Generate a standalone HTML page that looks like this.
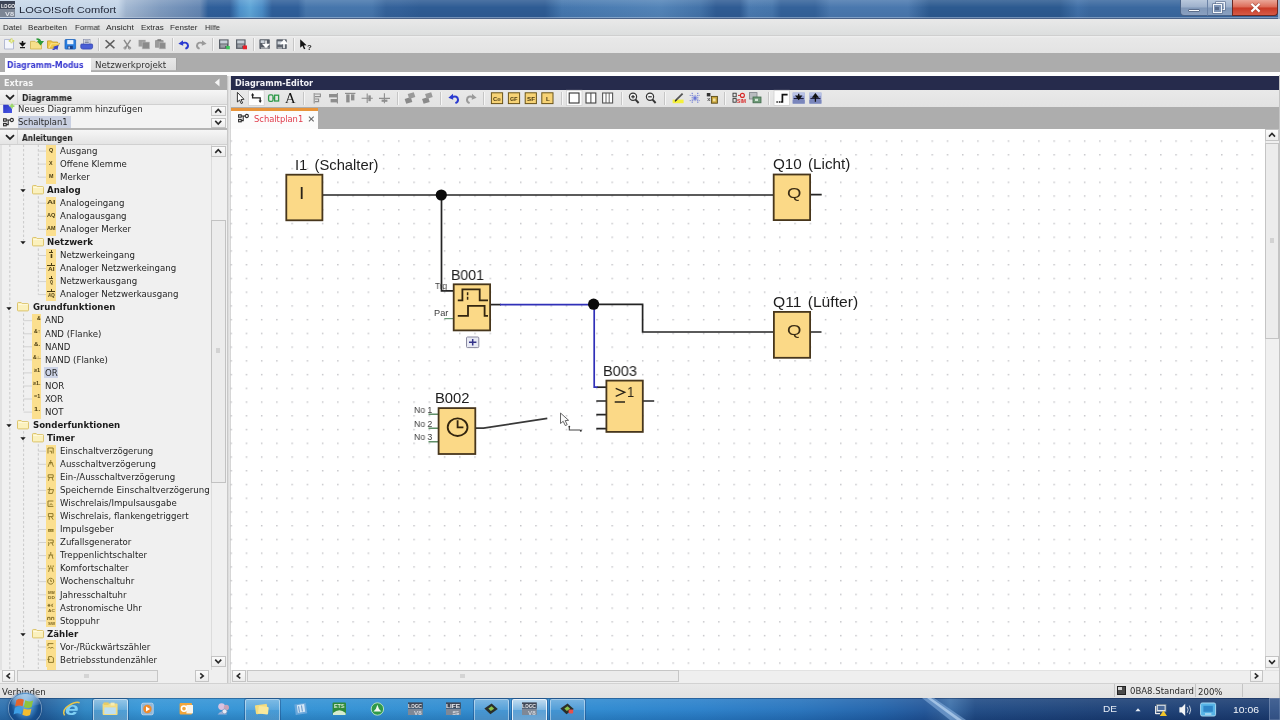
<!DOCTYPE html>
<html lang="de"><head><meta charset="utf-8"><title>LOGO!Soft Comfort</title>
<style>
html,body{margin:0;padding:0;}
body{width:1280px;height:720px;overflow:hidden;position:relative;background:#fff;font-family:"DejaVu Sans","Liberation Sans",sans-serif;}
div,span,svg{box-sizing:border-box;}
.t{will-change:transform;position:absolute;white-space:pre;transform-origin:0 50%;font-family:"DejaVu Sans","Liberation Sans",sans-serif;}
.t.l{font-family:"Liberation Sans",sans-serif;}
.t.b{font-weight:bold;}
svg{position:absolute;overflow:visible;}
.t.s{font-family:"Liberation Serif",serif;}

</style></head>
<body>
<div id="titlebar" style="position:absolute;left:0;top:0;width:1280px;height:19px;background:linear-gradient(90deg,#c9d9ea 0px,#c3d4e7 118px,#a3b8d2 126px,#7f9bbf 160px,#6486b2 200px,#2f5f9a 208px,#2e5e9a 230px,#4f93cc 240px,#5fa6d8 250px,#4a8cc6 262px,#2f5f9a 272px,#2f5f9a 298px,#4676ac 306px,#4676ac 372px,#34629a 386px,#33619a 400px,#2e5c94 420px,#2e5c94 545px,#4577ae 562px,#5384b8 660px,#4373a9 700px,#2f5c94 716px,#2f5c94 740px,#4a7ab0 749px,#4676ac 772px,#34629a 781px,#34629a 815px,#4a78ae 830px,#4a78ae 908px,#2c5a90 930px,#2c5a90 1060px,#4070a8 1078px,#3a689f 1090px,#3a689f 1280px);"></div>
<div style="position:absolute;left:0px;top:0px;width:1280px;height:19px;background:linear-gradient(180deg,rgba(255,255,255,.14) 0,rgba(255,255,255,0) 40%,rgba(0,0,20,.06) 100%);"></div>
<div style="position:absolute;left:0px;top:17.2px;width:1280px;height:1.1px;background:rgba(200,215,235,.45);"></div>
<div style="position:absolute;left:0px;top:18.2px;width:1280px;height:0.8px;background:#4a6288;"></div>
<div style="position:absolute;left:0px;top:1px;width:15px;height:8px;background:#3c4556;"></div>
<div style="position:absolute;left:0px;top:9px;width:15px;height:8px;background:#7b8594;"></div>
<span class="t l b" style="left:0.50px;top:2.00px;font-size:5.5px;line-height:8px;color:#fff;transform:scaleX(0.8640);">LOGO</span>
<span class="t l b" style="left:5.00px;top:9.50px;font-size:6px;line-height:8px;color:#dfe3ea;transform:scaleX(1.2255);">V8</span>
<span class="t l" style="left:19.40px;top:3.00px;font-size:9.9px;line-height:13px;color:#1a2030;transform:scaleX(1.1209);">LOGO!Soft Comfort</span>
<div style="position:absolute;left:1179.5px;top:0px;width:28px;height:15.6px;background:linear-gradient(180deg,#b9c8dc,#9db0cb 48%,#7f97b8 52%,#8aa0c0);border:1px solid #4a6388;border-top:0;border-radius:0 0 0 4px;"></div>
<div style="position:absolute;left:1206.5px;top:0px;width:26px;height:15.6px;background:linear-gradient(180deg,#b9c8dc,#9db0cb 48%,#7f97b8 52%,#8aa0c0);border:1px solid #4a6388;border-top:0;border-left:1px solid #6a82a6;"></div>
<div style="position:absolute;left:1232px;top:0px;width:46px;height:15.6px;background:linear-gradient(180deg,#eaa698,#dc6a56 48%,#c93a26 52%,#d65a46);border:1px solid #6a2a24;border-top:0;border-radius:0 0 4px 0;"></div>
<div style="position:absolute;left:1278px;top:0px;width:2px;height:19px;background:#9db6d2;"></div>
<div style="position:absolute;left:1188px;top:9px;width:12.4px;height:3.4px;background:#f6f8fb;border:1px solid #5c6e8c;border-radius:1px;"></div>
<div style="position:absolute;left:1215.6px;top:1.6px;width:9.6px;height:8.4px;border:1.6px solid #eef2f8;box-shadow:0 0 0 0.6px #5a6c8a;"></div>
<div style="position:absolute;left:1212.6px;top:4.4px;width:9.6px;height:8.4px;border:1.6px solid #f6f8fb;background:#7f95b6;box-shadow:0 0 0 0.6px #5a6c8a;"></div>
<div style="position:absolute;left:1215.4px;top:7.2px;width:4px;height:2.8px;background:#566a8c;"></div>
<svg style="left:1250px;top:2.6px" width="11" height="9.4" viewBox="0 0 11 9.4"><path d="M1.4 0.8 L9.6 8.6 M9.6 0.8 L1.4 8.6" stroke="#7a2a22" stroke-width="3.4" fill="none" opacity=".5"/><path d="M1.4 0.8 L9.6 8.6 M9.6 0.8 L1.4 8.6" stroke="#fdfdfd" stroke-width="2.2" fill="none"/></svg>
<div style="position:absolute;left:0px;top:19px;width:1280px;height:16.5px;background:linear-gradient(180deg,#e9e9e9,#dcdede);border-bottom:1px solid #cfcfcf;"></div>
<span class="t l" style="left:3.20px;top:21.80px;font-size:8px;line-height:11px;color:#2a2a2a;transform:scaleX(0.9846);">Datei</span>
<span class="t l" style="left:28.40px;top:21.80px;font-size:8px;line-height:11px;color:#2a2a2a;transform:scaleX(1.0077);">Bearbeiten</span>
<span class="t l" style="left:74.60px;top:21.80px;font-size:8px;line-height:11px;color:#2a2a2a;transform:scaleX(0.9785);">Format</span>
<span class="t l" style="left:106.00px;top:21.80px;font-size:8px;line-height:11px;color:#2a2a2a;transform:scaleX(1.0635);">Ansicht</span>
<span class="t l" style="left:140.50px;top:21.80px;font-size:8px;line-height:11px;color:#2a2a2a;transform:scaleX(1.0012);">Extras</span>
<span class="t l" style="left:170.30px;top:21.80px;font-size:8px;line-height:11px;color:#2a2a2a;transform:scaleX(1.0101);">Fenster</span>
<span class="t l" style="left:204.50px;top:21.80px;font-size:8px;line-height:11px;color:#2a2a2a;transform:scaleX(0.9428);">Hilfe</span>
<div style="position:absolute;left:0px;top:35.5px;width:1280px;height:17px;background:linear-gradient(180deg,#f0f0f0 0,#e8e8e8 2px,#e3e3e3 100%);"></div>
<div style="position:absolute;left:0px;top:52.5px;width:1280px;height:19.5px;background:#acacac;"></div>
<div style="position:absolute;left:5px;top:58px;width:86px;height:15px;background:#fff;"></div>
<div style="position:absolute;left:91px;top:58px;width:86.4px;height:13.2px;background:linear-gradient(180deg,#e8e8e8,#dcdcdc);border-right:1px solid #a2a2a2;border-bottom:1px solid #b4b4b4;"></div>
<span class="t b" style="left:7.00px;top:59.60px;font-size:8.0px;line-height:11px;color:#3a3ad0;transform:scaleX(0.9625);">Diagramm-Modus</span>
<span class="t" style="left:95.30px;top:59.60px;font-size:8.0px;line-height:11px;color:#333;transform:scaleX(1.0847);">Netzwerkprojekt</span>
<div style="position:absolute;left:0px;top:72px;width:1280px;height:3.6px;background:#fdfdfd;"></div>
<div style="position:absolute;left:0px;top:75px;width:227px;height:14.5px;background:#a9a9a9;"></div>
<span class="t b" style="left:4.00px;top:77.60px;font-size:8.0px;line-height:11px;color:#f6f6f6;transform:scaleX(1.0153);">Extras</span>
<svg style="left:214px;top:78px" width="6" height="9" viewBox="0 0 6 9"><path d="M5.5 0.5 L0.8 4.5 L5.5 8.5 Z" fill="#f4f4f4"/></svg>
<div style="position:absolute;left:226.5px;top:75.5px;width:4px;height:622px;background:linear-gradient(90deg,#bdbdbd 0,#dcdcdc 35%,#e9e9e9 70%,#c9c9c9 100%);"></div>
<div style="position:absolute;left:0px;top:89.5px;width:227px;height:15px;background:linear-gradient(180deg,#f6f6f6,#e4e4e4);border-bottom:1px solid #d0d0d0;"></div>
<div style="position:absolute;left:17px;top:90px;width:1px;height:14px;background:#d6d6d6;"></div>
<svg style="left:5px;top:94px" width="10" height="7" viewBox="0 0 10 7"><path d="M1 1.2 L5 5 L9 1.2" stroke="#222" stroke-width="1.8" fill="none"/></svg>
<span class="t b" style="left:21.50px;top:92.60px;font-size:8.0px;line-height:11px;color:#222;transform:scaleX(0.9624);">Diagramme</span>
<div style="position:absolute;left:0px;top:104.5px;width:227px;height:24px;background:#f3f3f3;"></div>
<span class="t" style="left:18.40px;top:103.60px;font-size:8.0px;line-height:11px;color:#2a2a2a;transform:scaleX(1.0660);">Neues Diagramm hinzufügen</span>
<div style="position:absolute;left:17.5px;top:115.5px;width:53.5px;height:13px;background:#c9d0e2;"></div>
<span class="t" style="left:18.40px;top:116.80px;font-size:8.0px;line-height:11px;color:#2a2a2a;transform:scaleX(1.0515);">Schaltplan1</span>
<svg style="left:2px;top:103px" width="14" height="11" viewBox="2 103 14 11"><defs><linearGradient id="ndg" x1="0" y1="0" x2="1" y2="1"><stop offset="0" stop-color="#2a34c4"/><stop offset="1" stop-color="#4a58e4"/></linearGradient></defs><path d="M3.2 104.8 H8.2 L12 108.8 V113 H3.2 Z" fill="url(#ndg)"/><path d="M12 103.8 V108.6 M9.6 106.2 H14.4" stroke="#9ad86a" stroke-width="1.7"/></svg>
<svg style="left:3px;top:117.6px" width="11.6" height="8.6" viewBox="0 0 11.6 8.6"><g fill="none" stroke="#2a2a2a" stroke-width="1.1"><rect x="0.6" y="0.8" width="2.6" height="2.4"/><rect x="0.6" y="5.4" width="2.6" height="2.4"/><circle cx="8.8" cy="2" r="1.6"/><path d="M3.2 2 H7.2 M3.2 6.6 H5.2 V2"/></g></svg>
<div style="position:absolute;left:211px;top:106px;width:14.5px;height:10px;background:linear-gradient(180deg,#fbfbfb,#ececec);border:1px solid #c4c4c4;"></div><svg style="left:0;top:0" width="1280" height="720"><path d="M215.25 112.6 L218.25 109.4 L221.25 112.6" stroke="#2a2a2a" stroke-width="1.6" fill="none"/></svg>
<div style="position:absolute;left:211px;top:117.5px;width:14.5px;height:10px;background:linear-gradient(180deg,#fbfbfb,#ececec);border:1px solid #c4c4c4;"></div><svg style="left:0;top:0" width="1280" height="720"><path d="M215.25 120.9 L218.25 124.1 L221.25 120.9" stroke="#2a2a2a" stroke-width="1.6" fill="none"/></svg>
<div style="position:absolute;left:0px;top:128.3px;width:227px;height:1.7px;background:#b4b4b4;"></div>
<div style="position:absolute;left:0px;top:130px;width:227px;height:14.5px;background:linear-gradient(180deg,#f6f6f6,#e4e4e4);border-bottom:1px solid #d0d0d0;"></div>
<div style="position:absolute;left:17px;top:130px;width:1px;height:14px;background:#d6d6d6;"></div>
<svg style="left:5px;top:134px" width="10" height="7" viewBox="0 0 10 7"><path d="M1 1.2 L5 5 L9 1.2" stroke="#222" stroke-width="1.8" fill="none"/></svg>
<span class="t b" style="left:21.50px;top:132.60px;font-size:8.0px;line-height:11px;color:#222;transform:scaleX(0.9205);">Anleitungen</span>
<div style="position:absolute;left:0px;top:144.5px;width:211px;height:525px;background:#f0f0f0;"></div>
<div style="position:absolute;left:0px;top:144.5px;width:2px;height:553px;background:#e2e2e2;"></div>
<div style="position:absolute;left:210.5px;top:144.5px;width:16px;height:525px;background:#f0f0f0;border-left:1px solid #dcdcdc;"></div>
<div style="position:absolute;left:211px;top:145.5px;width:14.5px;height:11.5px;background:linear-gradient(180deg,#fbfbfb,#ececec);border:1px solid #c4c4c4;"></div><svg style="left:0;top:0" width="1280" height="720"><path d="M215.25 152.85 L218.25 149.65 L221.25 152.85" stroke="#2a2a2a" stroke-width="1.6" fill="none"/></svg>
<div style="position:absolute;left:211px;top:219.5px;width:14.5px;height:263px;background:#ececec;border:1px solid #c2c2c2;"></div>
<div style="position:absolute;left:216px;top:348px;width:4px;height:5px;background:#d2d2d2;"></div>
<div style="position:absolute;left:211px;top:655.5px;width:14.5px;height:11.5px;background:linear-gradient(180deg,#fbfbfb,#ececec);border:1px solid #c4c4c4;"></div><svg style="left:0;top:0" width="1280" height="720"><path d="M215.25 659.65 L218.25 662.85 L221.25 659.65" stroke="#2a2a2a" stroke-width="1.6" fill="none"/></svg>
<div style="position:absolute;left:0px;top:669.5px;width:227px;height:13.5px;background:#efefef;"></div>
<div style="position:absolute;left:2px;top:670px;width:13px;height:11.8px;background:linear-gradient(180deg,#fbfbfb,#ececec);border:1px solid #c4c4c4;"></div><svg style="left:0;top:0" width="1280" height="720"><path d="M10.0 673.4 L7.0 675.9 L10.0 678.4" stroke="#2a2a2a" stroke-width="1.6" fill="none"/></svg>
<div style="position:absolute;left:17px;top:670.2px;width:141px;height:11.6px;background:#ececec;border:1px solid #c6c6c6;"></div>
<div style="position:absolute;left:84px;top:674px;width:5px;height:4px;background:#d4d4d4;"></div>
<div style="position:absolute;left:195px;top:670px;width:13.5px;height:11.8px;background:linear-gradient(180deg,#fbfbfb,#ececec);border:1px solid #c4c4c4;"></div><svg style="left:0;top:0" width="1280" height="720"><path d="M200.25 673.4 L203.25 675.9 L200.25 678.4" stroke="#2a2a2a" stroke-width="1.6" fill="none"/></svg>
<div style="position:absolute;left:230.5px;top:75.5px;width:1050px;height:14px;background:#262b4c;"></div>
<span class="t b" style="left:234.90px;top:77.60px;font-size:8.0px;line-height:11px;color:#f2f2f6;transform:scaleX(1.0137);">Diagramm-Editor</span>
<div style="position:absolute;left:230.5px;top:89.5px;width:1050px;height:17px;background:linear-gradient(180deg,#e9e9e9,#e2e2e2);"></div>
<div style="position:absolute;left:230.5px;top:106.5px;width:1050px;height:22px;background:#adadad;"></div>
<div style="position:absolute;left:231px;top:107.8px;width:87.2px;height:21.2px;background:#fcfcfc;border-top:3.2px solid #e8943a;"></div>
<svg style="left:238px;top:114.2px" width="11.6" height="8.6" viewBox="0 0 11.6 8.6"><g fill="none" stroke="#2a2a2a" stroke-width="1.1"><rect x="0.6" y="0.8" width="2.6" height="2.4"/><rect x="0.6" y="5.4" width="2.6" height="2.4"/><circle cx="8.8" cy="2" r="1.6"/><path d="M3.2 2 H7.2 M3.2 6.6 H5.2 V2"/></g></svg>
<span class="t" style="left:253.80px;top:114.20px;font-size:8.0px;line-height:11px;color:#e03a4a;transform:scaleX(1.0430);">Schaltplan1</span>
<svg style="left:308px;top:115.6px" width="6.6" height="6.2" viewBox="0 0 7 7"><path d="M0.8 0.8 L6.2 6.2 M6.2 0.8 L0.8 6.2" stroke="#666" stroke-width="1.2"/></svg>
<div style="position:absolute;left:230.5px;top:128.5px;width:1034px;height:541.5px;background:#fff;"></div>
<svg id="grid" style="left:0;top:0" width="1280" height="720"><defs><pattern id="dots" x="230.45" y="140.35" width="15.24" height="13.737" patternUnits="userSpaceOnUse"><rect x="0.3" y="0.3" width="1" height="1" fill="#808088"/></pattern></defs><rect x="230.5" y="140" width="1030" height="528" fill="url(#dots)"/></svg>
<div style="position:absolute;left:1264.5px;top:128.5px;width:15.5px;height:541.5px;background:#f0f0f0;border-left:1px solid #d8d8d8;"></div>
<div style="position:absolute;left:1265px;top:129px;width:14px;height:12px;background:linear-gradient(180deg,#fbfbfb,#ececec);border:1px solid #c4c4c4;"></div><svg style="left:0;top:0" width="1280" height="720"><path d="M1269.0 136.6 L1272.0 133.4 L1275.0 136.6" stroke="#2a2a2a" stroke-width="1.6" fill="none"/></svg>
<div style="position:absolute;left:1265px;top:143px;width:14px;height:196px;background:#ececec;border:1px solid #c4c4c4;"></div>
<div style="position:absolute;left:1270px;top:238px;width:4px;height:5px;background:#d2d2d2;"></div>
<div style="position:absolute;left:1265px;top:656px;width:14px;height:12px;background:linear-gradient(180deg,#fbfbfb,#ececec);border:1px solid #c4c4c4;"></div><svg style="left:0;top:0" width="1280" height="720"><path d="M1269.0 660.4 L1272.0 663.6 L1275.0 660.4" stroke="#2a2a2a" stroke-width="1.6" fill="none"/></svg>
<div style="position:absolute;left:230.5px;top:669.8px;width:1049.5px;height:13.2px;background:#efefef;border-top:1px solid #e2e2e2;"></div>
<div style="position:absolute;left:232px;top:670px;width:13.5px;height:11.8px;background:linear-gradient(180deg,#fbfbfb,#ececec);border:1px solid #c4c4c4;"></div><svg style="left:0;top:0" width="1280" height="720"><path d="M240.25 673.4 L237.25 675.9 L240.25 678.4" stroke="#2a2a2a" stroke-width="1.6" fill="none"/></svg>
<div style="position:absolute;left:247px;top:670.2px;width:432px;height:11.6px;background:#ececec;border:1px solid #c6c6c6;"></div>
<div style="position:absolute;left:460px;top:674px;width:5px;height:4px;background:#d4d4d4;"></div>
<div style="position:absolute;left:1249.5px;top:670px;width:13.5px;height:11.8px;background:linear-gradient(180deg,#fbfbfb,#ececec);border:1px solid #c4c4c4;"></div><svg style="left:0;top:0" width="1280" height="720"><path d="M1254.75 673.4 L1257.75 675.9 L1254.75 678.4" stroke="#2a2a2a" stroke-width="1.6" fill="none"/></svg>
<div style="position:absolute;left:0px;top:683px;width:1280px;height:15px;background:linear-gradient(180deg,#e9e9e9,#e2e2e2);border-top:1px solid #d2d2d2;"></div>
<span class="t" style="left:2.30px;top:686.60px;font-size:8.0px;line-height:11px;color:#2a2a2a;transform:scaleX(1.0786);">Verbinden</span>
<div style="position:absolute;left:1113.5px;top:684px;width:1px;height:13px;background:#c4c4c4;"></div>
<div style="position:absolute;left:1195px;top:684px;width:1px;height:13px;background:#c4c4c4;"></div>
<div style="position:absolute;left:1242px;top:684px;width:1px;height:13px;background:#c4c4c4;"></div>
<div style="position:absolute;left:1116.5px;top:685.5px;width:9px;height:9px;background:#4a4a4a;border:1px solid #222;"></div>
<div style="position:absolute;left:1118px;top:687px;width:4px;height:3px;background:#d8d8d8;"></div>
<span class="t" style="left:1130.00px;top:686.40px;font-size:8.0px;line-height:11px;color:#2a2a2a;transform:scaleX(1.0653);">0BA8.Standard</span>
<span class="t" style="left:1197.50px;top:686.60px;font-size:8.0px;line-height:11px;color:#2a2a2a;transform:scaleX(1.0710);">200%</span>
<svg id="diagram" style="left:0;top:0" width="1280" height="720" viewBox="0 0 1280 720">
<path d="M323 195 H773" stroke="#242424" stroke-width="1.7" fill="none"/>
<path d="M441.5 195 V290.8 H453" stroke="#242424" stroke-width="1.7" fill="none"/>
<path d="M490.5 304.6 H501" stroke="#242424" stroke-width="1.7" fill="none"/>
<path d="M500 304.6 H594.2 V387.2 H598" stroke="#3030b8" stroke-width="1.7" fill="none"/>
<path d="M597.5 387.2 H606" stroke="#242424" stroke-width="1.7" fill="none"/>
<path d="M594 304.4 H642.6 V332 H773.5" stroke="#242424" stroke-width="1.7" fill="none"/>
<path d="M810.5 194.7 H821.7 M810.5 332 H821.5" stroke="#242424" stroke-width="1.7" fill="none"/>
<circle cx="441.3" cy="195" r="5.6" fill="#0a0a0a"/>
<circle cx="593.6" cy="304.2" r="5.6" fill="#0a0a0a"/>
<path d="M596.3 401 H606 M596.3 414.6 H606 M596.3 428.7 H606 M643 401 H654.2" stroke="#242424" stroke-width="1.7" fill="none"/>
<path d="M428.5 414.3 H438 M428.5 428.3 H438 M428.5 441.8 H438" stroke="#5f8f68" stroke-width="1.6" fill="none"/>
<path d="M475.5 428.2 H483.5 L547.3 418.3" stroke="#383838" stroke-width="1.7" fill="none"/>
<path d="M444.3 318.6 H453" stroke="#6a9a76" stroke-width="1.2" fill="none"/>
<rect x="286.3" y="174.7" width="36.1" height="45.6" fill="#fbd987" stroke="#47361c" stroke-width="1.8"/>
<rect x="773.7" y="174.5" width="36.399999999999956" height="45.6" fill="#fbd987" stroke="#47361c" stroke-width="1.8"/>
<rect x="773.9000000000001" y="311.9" width="36.19999999999991" height="45.90000000000001" fill="#fbd987" stroke="#47361c" stroke-width="1.8"/>
<rect x="453.7" y="284.3" width="36.40000000000001" height="46.1" fill="#fbd987" stroke="#47361c" stroke-width="1.8"/>
<rect x="438.59999999999997" y="408.09999999999997" width="36.700000000000024" height="45.90000000000001" fill="#fbd987" stroke="#47361c" stroke-width="1.8"/>
<rect x="606.4000000000001" y="380.59999999999997" width="36.399999999999956" height="51.30000000000005" fill="#fbd987" stroke="#47361c" stroke-width="1.8"/>
<path d="M457.8 300.3 H462.4 V289.4 H479.7 V300.3 H488" stroke="#33250f" stroke-width="1.8" fill="none"/>
<path d="M467.6 292.2 V300.4" stroke="#33250f" stroke-width="1.5" stroke-dasharray="3 1.6" fill="none"/>
<path d="M457.8 315.8 H468 V305.8 H484.6 V315.8 H488" stroke="#33250f" stroke-width="1.8" fill="none"/>
<ellipse cx="457.6" cy="427.2" rx="9.9" ry="8.8" stroke="#33250f" stroke-width="1.8" fill="none"/>
<path d="M457.6 420.3 V427.4 H463.4" stroke="#33250f" stroke-width="1.8" fill="none"/>
<path d="M615.7 388.4 L624.8 392.3 L615.7 396.3" stroke="#2a2418" stroke-width="1.3" fill="none"/>
<path d="M614.7 402 H625" stroke="#2a2418" stroke-width="1.5" fill="none"/>
<rect x="466.5" y="337" width="12.3" height="10.6" rx="1" fill="#e8eaf4" stroke="#8a8aa0" stroke-width="1"/>
<path d="M472.7 339 V345.6 M469 342.3 H476.4" stroke="#33338a" stroke-width="1.5" fill="none"/>
<path d="M560.5 413 L560.5 423.5 L563.2 421.3 L565.3 425.6 L567.2 424.7 L565.2 420.6 L568.6 420.3 Z" fill="#fafafa" stroke="#555" stroke-width="0.9"/>
<path d="M569.3 426.8 V430 H580.3" stroke="#444" stroke-width="1.1" fill="none"/>
<circle cx="569.3" cy="426.6" r="0.9" fill="#333"/><circle cx="580.8" cy="430.8" r="1" fill="#333"/>
</svg>
<span class="t l" style="left:295.30px;top:155.60px;font-size:14.5px;line-height:18px;color:#1e1e1e;transform:scaleX(1.0185);word-spacing:3px;">I1 (Schalter)</span>
<span class="t l" style="left:773.20px;top:155.40px;font-size:14.5px;line-height:18px;color:#1e1e1e;transform:scaleX(1.0513);word-spacing:1.8px;">Q10 (Licht)</span>
<span class="t l" style="left:773.20px;top:293.00px;font-size:14.5px;line-height:18px;color:#1e1e1e;transform:scaleX(1.0785);word-spacing:1.8px;">Q11 (Lüfter)</span>
<span class="t l" style="left:450.60px;top:265.60px;font-size:14.8px;line-height:18px;color:#1e1e1e;transform:scaleX(0.9548);">B001</span>
<span class="t l" style="left:435.00px;top:389.20px;font-size:14.8px;line-height:18px;color:#1e1e1e;transform:scaleX(0.9953);">B002</span>
<span class="t l" style="left:602.90px;top:362.00px;font-size:14.8px;line-height:18px;color:#1e1e1e;transform:scaleX(0.9837);">B003</span>
<span class="t l" style="left:299.00px;top:182.50px;font-size:16.4px;line-height:20px;color:#2a2418;transform:scaleX(1.1836);">I</span>
<span class="t l" style="left:787.40px;top:182.90px;font-size:15px;line-height:19px;color:#3a2c14;transform:scaleX(1.2337);">Q</span>
<span class="t l" style="left:787.40px;top:320.20px;font-size:15px;line-height:19px;color:#3a2c14;transform:scaleX(1.2337);">Q</span>
<span class="t l" style="left:627.40px;top:383.30px;font-size:14.2px;line-height:18px;color:#2a2418;transform:scaleX(0.9125);">1</span>
<span class="t l" style="left:434.60px;top:280.20px;font-size:9.2px;line-height:12px;color:#3c3c3c;transform:scaleX(0.8994);">Trg</span>
<span class="t l" style="left:433.90px;top:307.20px;font-size:9.2px;line-height:12px;color:#3c3c3c;transform:scaleX(0.9712);">Par</span>
<span class="t l" style="left:413.90px;top:403.90px;font-size:9.2px;line-height:12px;color:#3c3c3c;transform:scaleX(0.9422);">No 1</span>
<span class="t l" style="left:413.90px;top:417.50px;font-size:9.2px;line-height:12px;color:#3c3c3c;transform:scaleX(0.9422);">No 2</span>
<span class="t l" style="left:413.90px;top:431.00px;font-size:9.2px;line-height:12px;color:#3c3c3c;transform:scaleX(0.9422);">No 3</span>
<svg id="treelines" style="left:0;top:0" width="227" height="720" viewBox="0 0 227 720">
<path d="M9.8 144.5 V669" stroke="#c9c9c9" stroke-width="1" stroke-dasharray="2.5 2" fill="none"/>
<path d="M23.6 144.5 V240.40000000000003" stroke="#c9c9c9" stroke-width="1" stroke-dasharray="2.5 2" fill="none"/><path d="M23.6 313.65000000000003 V412.05" stroke="#c9c9c9" stroke-width="1" stroke-dasharray="2.5 2" fill="none"/><path d="M23.6 431.1 V669" stroke="#c9c9c9" stroke-width="1" stroke-dasharray="2.5 2" fill="none"/>
<path d="M38.3 144.5 V177.15" stroke="#c9c9c9" stroke-width="1" stroke-dasharray="2.5 2" fill="none"/><path d="M38.3 196.20000000000002 V229.35000000000002" stroke="#c9c9c9" stroke-width="1" stroke-dasharray="2.5 2" fill="none"/><path d="M38.3 248.40000000000003 V294.6" stroke="#c9c9c9" stroke-width="1" stroke-dasharray="2.5 2" fill="none"/><path d="M38.3 444.15000000000003 V620.85" stroke="#c9c9c9" stroke-width="1" stroke-dasharray="2.5 2" fill="none"/><path d="M38.3 639.9000000000001 V669" stroke="#c9c9c9" stroke-width="1" stroke-dasharray="2.5 2" fill="none"/>
<path d="M38.3 151.1 H46.3" stroke="#d2d2d2" stroke-width="1" fill="none"/>
<path d="M38.3 164.1 H46.3" stroke="#d2d2d2" stroke-width="1" fill="none"/>
<path d="M38.3 177.2 H46.3" stroke="#d2d2d2" stroke-width="1" fill="none"/>
<path d="M38.3 203.2 H46.3" stroke="#d2d2d2" stroke-width="1" fill="none"/>
<path d="M38.3 216.3 H46.3" stroke="#d2d2d2" stroke-width="1" fill="none"/>
<path d="M38.3 229.4 H46.3" stroke="#d2d2d2" stroke-width="1" fill="none"/>
<path d="M38.3 255.5 H46.3" stroke="#d2d2d2" stroke-width="1" fill="none"/>
<path d="M38.3 268.5 H46.3" stroke="#d2d2d2" stroke-width="1" fill="none"/>
<path d="M38.3 281.6 H46.3" stroke="#d2d2d2" stroke-width="1" fill="none"/>
<path d="M38.3 294.6 H46.3" stroke="#d2d2d2" stroke-width="1" fill="none"/>
<path d="M23.6 320.7 H32.0" stroke="#d2d2d2" stroke-width="1" fill="none"/>
<path d="M23.6 333.8 H32.0" stroke="#d2d2d2" stroke-width="1" fill="none"/>
<path d="M23.6 346.8 H32.0" stroke="#d2d2d2" stroke-width="1" fill="none"/>
<path d="M23.6 359.9 H32.0" stroke="#d2d2d2" stroke-width="1" fill="none"/>
<path d="M23.6 372.9 H32.0" stroke="#d2d2d2" stroke-width="1" fill="none"/>
<path d="M23.6 386.0 H32.0" stroke="#d2d2d2" stroke-width="1" fill="none"/>
<path d="M23.6 399.0 H32.0" stroke="#d2d2d2" stroke-width="1" fill="none"/>
<path d="M23.6 412.1 H32.0" stroke="#d2d2d2" stroke-width="1" fill="none"/>
<path d="M38.3 451.2 H46.3" stroke="#d2d2d2" stroke-width="1" fill="none"/>
<path d="M38.3 464.3 H46.3" stroke="#d2d2d2" stroke-width="1" fill="none"/>
<path d="M38.3 477.3 H46.3" stroke="#d2d2d2" stroke-width="1" fill="none"/>
<path d="M38.3 490.4 H46.3" stroke="#d2d2d2" stroke-width="1" fill="none"/>
<path d="M38.3 503.4 H46.3" stroke="#d2d2d2" stroke-width="1" fill="none"/>
<path d="M38.3 516.5 H46.3" stroke="#d2d2d2" stroke-width="1" fill="none"/>
<path d="M38.3 529.5 H46.3" stroke="#d2d2d2" stroke-width="1" fill="none"/>
<path d="M38.3 542.5 H46.3" stroke="#d2d2d2" stroke-width="1" fill="none"/>
<path d="M38.3 555.6 H46.3" stroke="#d2d2d2" stroke-width="1" fill="none"/>
<path d="M38.3 568.7 H46.3" stroke="#d2d2d2" stroke-width="1" fill="none"/>
<path d="M38.3 581.7 H46.3" stroke="#d2d2d2" stroke-width="1" fill="none"/>
<path d="M38.3 594.8 H46.3" stroke="#d2d2d2" stroke-width="1" fill="none"/>
<path d="M38.3 607.8 H46.3" stroke="#d2d2d2" stroke-width="1" fill="none"/>
<path d="M38.3 620.9 H46.3" stroke="#d2d2d2" stroke-width="1" fill="none"/>
<path d="M38.3 647.0 H46.3" stroke="#d2d2d2" stroke-width="1" fill="none"/>
<path d="M38.3 660.0 H46.3" stroke="#d2d2d2" stroke-width="1" fill="none"/>
</svg>
<div style="position:absolute;left:46.3px;top:144.5px;width:9.4px;height:13.1px;background:#fbdf8e;"></div>
<span class="t" style="left:59.50px;top:145.80px;font-size:8.0px;line-height:11px;color:#242424;transform:scaleX(1.0750);">Ausgang</span>
<div style="position:absolute;left:46.3px;top:157.55px;width:9.4px;height:13.1px;background:#fbdf8e;"></div>
<span class="t" style="left:59.50px;top:158.85px;font-size:8.0px;line-height:11px;color:#242424;transform:scaleX(1.0750);">Offene Klemme</span>
<div style="position:absolute;left:46.3px;top:170.6px;width:9.4px;height:13.1px;background:#fbdf8e;"></div>
<span class="t" style="left:59.50px;top:171.90px;font-size:8.0px;line-height:11px;color:#242424;transform:scaleX(1.0750);">Merker</span>
<svg style="left:20.2px;top:189.20px" width="6" height="3.4" viewBox="0 0 6 3.4"><path d="M0.3 0.2 H5.7 L3 3.2 Z" fill="#1a1a1a"/></svg>
<svg style="left:32.2px;top:185.00px" width="12" height="9.4" viewBox="0 0 12 9.4"><path d="M0.5 1.3 Q0.5 0.5 1.3 0.5 H4.2 L5.2 1.6 H10.8 Q11.5 1.6 11.5 2.3 V8.2 Q11.5 8.9 10.8 8.9 H1.2 Q0.5 8.9 0.5 8.2 Z" fill="#fbf1bd" stroke="#d9bf62" stroke-width="0.9"/><path d="M1.2 2.6 H10.8" stroke="#fffbe2" stroke-width="0.9"/></svg>
<span class="t b" style="left:47.30px;top:184.95px;font-size:8.0px;line-height:11px;color:#1c1c1c;transform:scaleX(1.0750);">Analog</span>
<div style="position:absolute;left:46.3px;top:196.7px;width:9.4px;height:13.1px;background:#fbdf8e;"></div>
<span class="t" style="left:59.50px;top:198.00px;font-size:8.0px;line-height:11px;color:#242424;transform:scaleX(1.0750);">Analogeingang</span>
<div style="position:absolute;left:46.3px;top:209.75px;width:9.4px;height:13.1px;background:#fbdf8e;"></div>
<span class="t" style="left:59.50px;top:211.05px;font-size:8.0px;line-height:11px;color:#242424;transform:scaleX(1.0750);">Analogausgang</span>
<div style="position:absolute;left:46.3px;top:222.8px;width:9.4px;height:13.1px;background:#fbdf8e;"></div>
<span class="t" style="left:59.50px;top:224.10px;font-size:8.0px;line-height:11px;color:#242424;transform:scaleX(1.0750);">Analoger Merker</span>
<svg style="left:20.2px;top:241.40px" width="6" height="3.4" viewBox="0 0 6 3.4"><path d="M0.3 0.2 H5.7 L3 3.2 Z" fill="#1a1a1a"/></svg>
<svg style="left:32.2px;top:237.20px" width="12" height="9.4" viewBox="0 0 12 9.4"><path d="M0.5 1.3 Q0.5 0.5 1.3 0.5 H4.2 L5.2 1.6 H10.8 Q11.5 1.6 11.5 2.3 V8.2 Q11.5 8.9 10.8 8.9 H1.2 Q0.5 8.9 0.5 8.2 Z" fill="#fbf1bd" stroke="#d9bf62" stroke-width="0.9"/><path d="M1.2 2.6 H10.8" stroke="#fffbe2" stroke-width="0.9"/></svg>
<span class="t b" style="left:47.30px;top:237.15px;font-size:8.0px;line-height:11px;color:#1c1c1c;transform:scaleX(1.0750);">Netzwerk</span>
<div style="position:absolute;left:46.3px;top:248.9px;width:9.4px;height:13.1px;background:#fbdf8e;"></div>
<span class="t" style="left:59.50px;top:250.20px;font-size:8.0px;line-height:11px;color:#242424;transform:scaleX(1.0750);">Netzwerkeingang</span>
<div style="position:absolute;left:46.3px;top:261.95px;width:9.4px;height:13.1px;background:#fbdf8e;"></div>
<span class="t" style="left:59.50px;top:263.25px;font-size:8.0px;line-height:11px;color:#242424;transform:scaleX(1.0750);">Analoger Netzwerkeingang</span>
<div style="position:absolute;left:46.3px;top:275.0px;width:9.4px;height:13.1px;background:#fbdf8e;"></div>
<span class="t" style="left:59.50px;top:276.30px;font-size:8.0px;line-height:11px;color:#242424;transform:scaleX(1.0750);">Netzwerkausgang</span>
<div style="position:absolute;left:46.3px;top:288.05px;width:9.4px;height:13.1px;background:#fbdf8e;"></div>
<span class="t" style="left:59.50px;top:289.35px;font-size:8.0px;line-height:11px;color:#242424;transform:scaleX(1.0750);">Analoger Netzwerkausgang</span>
<svg style="left:5.6px;top:306.65px" width="6" height="3.4" viewBox="0 0 6 3.4"><path d="M0.3 0.2 H5.7 L3 3.2 Z" fill="#1a1a1a"/></svg>
<svg style="left:17.3px;top:302.45px" width="12" height="9.4" viewBox="0 0 12 9.4"><path d="M0.5 1.3 Q0.5 0.5 1.3 0.5 H4.2 L5.2 1.6 H10.8 Q11.5 1.6 11.5 2.3 V8.2 Q11.5 8.9 10.8 8.9 H1.2 Q0.5 8.9 0.5 8.2 Z" fill="#fbf1bd" stroke="#d9bf62" stroke-width="0.9"/><path d="M1.2 2.6 H10.8" stroke="#fffbe2" stroke-width="0.9"/></svg>
<span class="t b" style="left:32.80px;top:302.40px;font-size:8.0px;line-height:11px;color:#1c1c1c;transform:scaleX(1.0750);">Grundfunktionen</span>
<div style="position:absolute;left:32.0px;top:314.15px;width:9.4px;height:13.1px;background:#fbdf8e;"></div>
<span class="t" style="left:45.00px;top:315.45px;font-size:8.0px;line-height:11px;color:#242424;transform:scaleX(1.0750);">AND</span>
<div style="position:absolute;left:32.0px;top:327.2px;width:9.4px;height:13.1px;background:#fbdf8e;"></div>
<span class="t" style="left:45.00px;top:328.50px;font-size:8.0px;line-height:11px;color:#242424;transform:scaleX(1.0750);">AND (Flanke)</span>
<div style="position:absolute;left:32.0px;top:340.25px;width:9.4px;height:13.1px;background:#fbdf8e;"></div>
<span class="t" style="left:45.00px;top:341.55px;font-size:8.0px;line-height:11px;color:#242424;transform:scaleX(1.0750);">NAND</span>
<div style="position:absolute;left:32.0px;top:353.3px;width:9.4px;height:13.1px;background:#fbdf8e;"></div>
<span class="t" style="left:45.00px;top:354.60px;font-size:8.0px;line-height:11px;color:#242424;transform:scaleX(1.0750);">NAND (Flanke)</span>
<div style="position:absolute;left:32.0px;top:366.35px;width:9.4px;height:13.1px;background:#fbdf8e;"></div>
<div style="position:absolute;left:44px;top:366.6px;width:14px;height:11.8px;background:#ccd3e6;"></div>
<span class="t" style="left:45.00px;top:367.65px;font-size:8.0px;line-height:11px;color:#242424;transform:scaleX(1.0750);">OR</span>
<div style="position:absolute;left:32.0px;top:379.4px;width:9.4px;height:13.1px;background:#fbdf8e;"></div>
<span class="t" style="left:45.00px;top:380.70px;font-size:8.0px;line-height:11px;color:#242424;transform:scaleX(1.0750);">NOR</span>
<div style="position:absolute;left:32.0px;top:392.45px;width:9.4px;height:13.1px;background:#fbdf8e;"></div>
<span class="t" style="left:45.00px;top:393.75px;font-size:8.0px;line-height:11px;color:#242424;transform:scaleX(1.0750);">XOR</span>
<div style="position:absolute;left:32.0px;top:405.5px;width:9.4px;height:13.1px;background:#fbdf8e;"></div>
<span class="t" style="left:45.00px;top:406.80px;font-size:8.0px;line-height:11px;color:#242424;transform:scaleX(1.0750);">NOT</span>
<svg style="left:5.6px;top:424.10px" width="6" height="3.4" viewBox="0 0 6 3.4"><path d="M0.3 0.2 H5.7 L3 3.2 Z" fill="#1a1a1a"/></svg>
<svg style="left:17.3px;top:419.90px" width="12" height="9.4" viewBox="0 0 12 9.4"><path d="M0.5 1.3 Q0.5 0.5 1.3 0.5 H4.2 L5.2 1.6 H10.8 Q11.5 1.6 11.5 2.3 V8.2 Q11.5 8.9 10.8 8.9 H1.2 Q0.5 8.9 0.5 8.2 Z" fill="#fbf1bd" stroke="#d9bf62" stroke-width="0.9"/><path d="M1.2 2.6 H10.8" stroke="#fffbe2" stroke-width="0.9"/></svg>
<span class="t b" style="left:32.80px;top:419.85px;font-size:8.0px;line-height:11px;color:#1c1c1c;transform:scaleX(1.0750);">Sonderfunktionen</span>
<svg style="left:20.2px;top:437.15px" width="6" height="3.4" viewBox="0 0 6 3.4"><path d="M0.3 0.2 H5.7 L3 3.2 Z" fill="#1a1a1a"/></svg>
<svg style="left:32.2px;top:432.95px" width="12" height="9.4" viewBox="0 0 12 9.4"><path d="M0.5 1.3 Q0.5 0.5 1.3 0.5 H4.2 L5.2 1.6 H10.8 Q11.5 1.6 11.5 2.3 V8.2 Q11.5 8.9 10.8 8.9 H1.2 Q0.5 8.9 0.5 8.2 Z" fill="#fbf1bd" stroke="#d9bf62" stroke-width="0.9"/><path d="M1.2 2.6 H10.8" stroke="#fffbe2" stroke-width="0.9"/></svg>
<span class="t b" style="left:47.30px;top:432.90px;font-size:8.0px;line-height:11px;color:#1c1c1c;transform:scaleX(1.0750);">Timer</span>
<div style="position:absolute;left:46.3px;top:444.65px;width:9.4px;height:13.1px;background:#fbdf8e;"></div>
<span class="t" style="left:59.50px;top:445.95px;font-size:8.0px;line-height:11px;color:#242424;transform:scaleX(1.0750);">Einschaltverzögerung</span>
<div style="position:absolute;left:46.3px;top:457.7px;width:9.4px;height:13.1px;background:#fbdf8e;"></div>
<span class="t" style="left:59.50px;top:459.00px;font-size:8.0px;line-height:11px;color:#242424;transform:scaleX(1.0750);">Ausschaltverzögerung</span>
<div style="position:absolute;left:46.3px;top:470.75px;width:9.4px;height:13.1px;background:#fbdf8e;"></div>
<span class="t" style="left:59.50px;top:472.05px;font-size:8.0px;line-height:11px;color:#242424;transform:scaleX(1.0750);">Ein-/Ausschaltverzögerung</span>
<div style="position:absolute;left:46.3px;top:483.8px;width:9.4px;height:13.1px;background:#fbdf8e;"></div>
<span class="t" style="left:59.50px;top:485.10px;font-size:8.0px;line-height:11px;color:#242424;transform:scaleX(1.0750);">Speichernde Einschaltverzögerung</span>
<div style="position:absolute;left:46.3px;top:496.85px;width:9.4px;height:13.1px;background:#fbdf8e;"></div>
<span class="t" style="left:59.50px;top:498.15px;font-size:8.0px;line-height:11px;color:#242424;transform:scaleX(1.0750);">Wischrelais/Impulsausgabe</span>
<div style="position:absolute;left:46.3px;top:509.9px;width:9.4px;height:13.1px;background:#fbdf8e;"></div>
<span class="t" style="left:59.50px;top:511.20px;font-size:8.0px;line-height:11px;color:#242424;transform:scaleX(1.0750);">Wischrelais, flankengetriggert</span>
<div style="position:absolute;left:46.3px;top:522.95px;width:9.4px;height:13.1px;background:#fbdf8e;"></div>
<span class="t" style="left:59.50px;top:524.25px;font-size:8.0px;line-height:11px;color:#242424;transform:scaleX(1.0750);">Impulsgeber</span>
<div style="position:absolute;left:46.3px;top:536.0px;width:9.4px;height:13.1px;background:#fbdf8e;"></div>
<span class="t" style="left:59.50px;top:537.30px;font-size:8.0px;line-height:11px;color:#242424;transform:scaleX(1.0750);">Zufallsgenerator</span>
<div style="position:absolute;left:46.3px;top:549.05px;width:9.4px;height:13.1px;background:#fbdf8e;"></div>
<span class="t" style="left:59.50px;top:550.35px;font-size:8.0px;line-height:11px;color:#242424;transform:scaleX(1.0750);">Treppenlichtschalter</span>
<div style="position:absolute;left:46.3px;top:562.1px;width:9.4px;height:13.1px;background:#fbdf8e;"></div>
<span class="t" style="left:59.50px;top:563.40px;font-size:8.0px;line-height:11px;color:#242424;transform:scaleX(1.0750);">Komfortschalter</span>
<div style="position:absolute;left:46.3px;top:575.15px;width:9.4px;height:13.1px;background:#fbdf8e;"></div>
<span class="t" style="left:59.50px;top:576.45px;font-size:8.0px;line-height:11px;color:#242424;transform:scaleX(1.0750);">Wochenschaltuhr</span>
<div style="position:absolute;left:46.3px;top:588.2px;width:9.4px;height:13.1px;background:#fbdf8e;"></div>
<span class="t" style="left:59.50px;top:589.50px;font-size:8.0px;line-height:11px;color:#242424;transform:scaleX(1.0750);">Jahresschaltuhr</span>
<div style="position:absolute;left:46.3px;top:601.25px;width:9.4px;height:13.1px;background:#fbdf8e;"></div>
<span class="t" style="left:59.50px;top:602.55px;font-size:8.0px;line-height:11px;color:#242424;transform:scaleX(1.0750);">Astronomische Uhr</span>
<div style="position:absolute;left:46.3px;top:614.3px;width:9.4px;height:13.1px;background:#fbdf8e;"></div>
<span class="t" style="left:59.50px;top:615.60px;font-size:8.0px;line-height:11px;color:#242424;transform:scaleX(1.0750);">Stoppuhr</span>
<svg style="left:20.2px;top:632.90px" width="6" height="3.4" viewBox="0 0 6 3.4"><path d="M0.3 0.2 H5.7 L3 3.2 Z" fill="#1a1a1a"/></svg>
<svg style="left:32.2px;top:628.70px" width="12" height="9.4" viewBox="0 0 12 9.4"><path d="M0.5 1.3 Q0.5 0.5 1.3 0.5 H4.2 L5.2 1.6 H10.8 Q11.5 1.6 11.5 2.3 V8.2 Q11.5 8.9 10.8 8.9 H1.2 Q0.5 8.9 0.5 8.2 Z" fill="#fbf1bd" stroke="#d9bf62" stroke-width="0.9"/><path d="M1.2 2.6 H10.8" stroke="#fffbe2" stroke-width="0.9"/></svg>
<span class="t b" style="left:47.30px;top:628.65px;font-size:8.0px;line-height:11px;color:#1c1c1c;transform:scaleX(1.0750);">Zähler</span>
<div style="position:absolute;left:46.3px;top:640.4px;width:9.4px;height:13.1px;background:#fbdf8e;"></div>
<span class="t" style="left:59.50px;top:641.70px;font-size:8.0px;line-height:11px;color:#242424;transform:scaleX(1.0750);">Vor-/Rückwärtszähler</span>
<div style="position:absolute;left:46.3px;top:653.45px;width:9.4px;height:13.1px;background:#fbdf8e;"></div>
<span class="t" style="left:59.50px;top:654.75px;font-size:8.0px;line-height:11px;color:#242424;transform:scaleX(1.0750);">Betriebsstundenzähler</span>
<div style="position:absolute;left:46.6px;top:665.5px;width:9.4px;height:4px;background:#fbdf8e;"></div>
<span class="t l b" style="left:48.90px;top:145.65px;font-size:5.4px;line-height:8px;color:#4a3c12;">Q</span>
<span class="t l b" style="left:48.90px;top:158.70px;font-size:5.4px;line-height:8px;color:#4a3c12;">X</span>
<span class="t l b" style="left:48.90px;top:171.75px;font-size:5.4px;line-height:8px;color:#4a3c12;">M</span>
<span class="t l b" style="left:46.90px;top:198.05px;font-size:5.2px;line-height:8px;color:#4a3c12;transform:scaleX(1.6193);">AI</span>
<span class="t l b" style="left:46.90px;top:211.10px;font-size:5.2px;line-height:8px;color:#4a3c12;transform:scaleX(1.0795);">AQ</span>
<span class="t l b" style="left:46.90px;top:224.15px;font-size:5.2px;line-height:8px;color:#4a3c12;transform:scaleX(1.0398);">AM</span>
<div style="position:absolute;left:48.9px;top:251.85000000000002px;width:4.2px;height:0.9px;background:#4a3c12;"></div>
<div style="position:absolute;left:50.599999999999994px;top:250.25000000000003px;width:0.9px;height:1.8px;background:#4a3c12;"></div>
<span class="t l b" style="left:49.50px;top:252.05px;font-size:5.2px;line-height:8px;color:#4a3c12;transform:scaleX(2.0645);">I</span>
<div style="position:absolute;left:47.1px;top:264.9px;width:7.8px;height:0.9px;background:#4a3c12;"></div>
<div style="position:absolute;left:50.599999999999994px;top:263.3px;width:0.9px;height:1.8px;background:#4a3c12;"></div>
<span class="t l b" style="left:47.70px;top:265.10px;font-size:5.2px;line-height:8px;color:#4a3c12;transform:scaleX(1.2723);">AI</span>
<div style="position:absolute;left:48.9px;top:277.95px;width:4.2px;height:0.9px;background:#4a3c12;"></div>
<div style="position:absolute;left:50.599999999999994px;top:276.35px;width:0.9px;height:1.8px;background:#4a3c12;"></div>
<span class="t l b" style="left:49.50px;top:278.15px;font-size:5.2px;line-height:8px;color:#4a3c12;transform:scaleX(0.7413);">Q</span>
<div style="position:absolute;left:47.1px;top:291.0px;width:7.8px;height:0.9px;background:#4a3c12;"></div>
<div style="position:absolute;left:50.599999999999994px;top:289.40000000000003px;width:0.9px;height:1.8px;background:#4a3c12;"></div>
<span class="t l b" style="left:47.70px;top:291.20px;font-size:5.2px;line-height:8px;color:#4a3c12;transform:scaleX(0.8482);">AQ</span>
<span class="t l b" style="left:37.20px;top:313.50px;font-size:5.2px;line-height:8px;color:#4a3c12;transform:scaleX(0.9067);">&amp;</span>
<span class="t l b" style="left:34.40px;top:326.55px;font-size:5.2px;line-height:8px;color:#4a3c12;transform:scaleX(0.9773);">&amp;↑</span>
<span class="t l b" style="left:34.40px;top:339.60px;font-size:5.2px;line-height:8px;color:#4a3c12;transform:scaleX(1.1952);">&amp;.</span>
<span class="t l b" style="left:33.00px;top:352.65px;font-size:5.2px;line-height:8px;color:#4a3c12;transform:scaleX(0.9767);">&amp;↓.</span>
<span class="t l b" style="left:34.40px;top:365.70px;font-size:5.2px;line-height:8px;color:#4a3c12;transform:scaleX(1.0812);">≥1</span>
<span class="t l b" style="left:33.00px;top:378.75px;font-size:5.2px;line-height:8px;color:#4a3c12;transform:scaleX(1.0574);">≥1.</span>
<span class="t l b" style="left:34.40px;top:391.80px;font-size:5.2px;line-height:8px;color:#4a3c12;transform:scaleX(1.0470);">=1</span>
<span class="t l b" style="left:34.40px;top:404.85px;font-size:5.2px;line-height:8px;color:#4a3c12;transform:scaleX(1.4325);">1.</span>
<svg style="left:46.3px;top:444.40px" width="9.4" height="13" viewBox="0 0 9.4 13"><path d="M2 9.5 V4 H7.2 V9.5 M3.6 7.2 H5.6 V9.5" stroke="#8a7426" stroke-width="0.95" fill="none"/></svg>
<svg style="left:46.3px;top:457.45px" width="9.4" height="13" viewBox="0 0 9.4 13"><path d="M2.2 9.8 L3.6 5.5 H6 L7.4 9.8 M4.8 3 V7.5 M3.2 5.5 H6.4" stroke="#8a7426" stroke-width="0.95" fill="none"/></svg>
<svg style="left:46.3px;top:470.50px" width="9.4" height="13" viewBox="0 0 9.4 13"><path d="M2.2 3.8 H7.2 V6.4 H2.2 Z M3.4 6.4 L2.4 9.8 M6 6.4 L7.2 9.8" stroke="#8a7426" stroke-width="0.95" fill="none"/></svg>
<svg style="left:46.3px;top:483.55px" width="9.4" height="13" viewBox="0 0 9.4 13"><path d="M1.6 5.6 H3.6 V3.4 M3.6 5.6 H7.6 L6.4 9.4 H2.6 Z" stroke="#8a7426" stroke-width="0.95" fill="none"/></svg>
<svg style="left:46.3px;top:496.60px" width="9.4" height="13" viewBox="0 0 9.4 13"><path d="M2 9.4 V4 H7.4 M2 9.4 H7.4 M3.6 7.8 Q5 5.8 6.6 7.8" stroke="#8a7426" stroke-width="0.95" fill="none"/></svg>
<svg style="left:46.3px;top:509.65px" width="9.4" height="13" viewBox="0 0 9.4 13"><path d="M2.4 3.6 H7 V6.6 H2.4 Z M3.2 6.6 V9.8 M5.2 6.6 L7.2 9.8" stroke="#8a7426" stroke-width="0.95" fill="none"/></svg>
<svg style="left:46.3px;top:522.70px" width="9.4" height="13" viewBox="0 0 9.4 13"><path d="M2 6.6 H7.6 M2 8.2 H7.6 M2.8 6.6 V8.2 M4.8 6.6 V8.2 M6.8 6.6 V8.2" stroke="#8a7426" stroke-width="0.95" fill="none"/></svg>
<svg style="left:46.3px;top:535.75px" width="9.4" height="13" viewBox="0 0 9.4 13"><path d="M2 4 H7.2 V6.8 H4 M3.2 6.8 L2.4 9.8 M6 6.8 L7.2 9.8 M2 6.8 H3" stroke="#8a7426" stroke-width="0.95" fill="none"/></svg>
<svg style="left:46.3px;top:548.80px" width="9.4" height="13" viewBox="0 0 9.4 13"><path d="M4.8 3 V6 M2.4 6 H7.2 M3.6 6 L2.6 9.8 M6 6 L7 9.8" stroke="#8a7426" stroke-width="0.95" fill="none"/></svg>
<svg style="left:46.3px;top:561.85px" width="9.4" height="13" viewBox="0 0 9.4 13"><path d="M2.4 3.4 V5 M4.8 3.4 V5 M7.2 3.4 V5 M2.4 6 H7.2 M3.6 6 L2.6 9.8 M6 6 L7 9.8" stroke="#8a7426" stroke-width="0.95" fill="none"/></svg>
<svg style="left:46.3px;top:574.90px" width="9.4" height="13" viewBox="0 0 9.4 13"><path d="M4.7 3.2 A3 3 0 1 0 4.71 3.2 M4.7 4.6 V6.3 H6" stroke="#8a7426" stroke-width="0.95" fill="none"/></svg>
<span class="t l b" style="left:47.90px;top:589.15px;font-size:4.4px;line-height:7px;color:#7a6420;transform:scaleX(0.9279);">MM</span>
<span class="t l b" style="left:47.90px;top:593.95px;font-size:4.4px;line-height:7px;color:#7a6420;transform:scaleX(1.0719);">DD</span>
<svg style="left:46.3px;top:602.80px" width="9.4" height="5" viewBox="0 0 9.4 5"><path d="M3 0.8 V4 M1.4 2.4 H4.6 M1.9 1.3 L4.1 3.5 M4.1 1.3 L1.9 3.5" stroke="#7a6420" stroke-width="0.7"/><path d="M7.6 0.8 A1.7 1.7 0 1 0 7.6 4 A1.2 1.6 0 1 1 7.6 0.8 Z" fill="#7a6420"/></svg>
<span class="t l b" style="left:47.90px;top:607.00px;font-size:4.4px;line-height:7px;color:#7a6420;transform:scaleX(1.0719);">AC</span>
<svg style="left:46.3px;top:615.85px" width="9.4" height="5" viewBox="0 0 9.4 5"><path d="M1.6 4 V1.4 H4 V4 M5.4 4 V1.4 H7.8 V4" stroke="#7a6420" stroke-width="0.9" fill="none"/></svg>
<span class="t l b" style="left:47.90px;top:620.05px;font-size:4.4px;line-height:7px;color:#7a6420;transform:scaleX(0.9607);">SW</span>
<svg style="left:46.3px;top:640.15px" width="9.4" height="13" viewBox="0 0 9.4 13"><path d="M2 3.6 H7.4 M2 3.6 V6 M2 8.4 L3.4 7 L4.8 8.4 L6.2 7 L7.6 8.4" stroke="#8a7426" stroke-width="0.95" fill="none"/></svg>
<svg style="left:46.3px;top:653.20px" width="9.4" height="13" viewBox="0 0 9.4 13"><path d="M2.6 3.6 H6 L7.4 5 V9.4 H2.6 Z M1.4 6.4 H3.8" stroke="#8a7426" stroke-width="0.95" fill="none"/></svg>
<svg id="tb1" style="left:0;top:35px" width="330" height="18" viewBox="0 35 330 18"><g transform="translate(0 44.4) scale(1 0.9) translate(0 -44.4)">
<path d="M4.5 39 H11 L13.5 41.5 V49.5 H4.5 Z" fill="#f4f6fc" stroke="#a9b0cc" stroke-width="0.9"/><path d="M11.5 37.8 V43.2 M8.8 40.5 H14.2" stroke="#c8d24a" stroke-width="1.8"/><path d="M11.5 38.6 V42.4 M9.6 40.5 H13.4" stroke="#f5f7c8" stroke-width="0.8"/>
<path d="M22.5 40.6 V43.6 M20.4 43.2 L22.5 45.8 L24.6 43.2 Z" stroke="#111" stroke-width="1.5" fill="#111"/><path d="M20 48 H25" stroke="#111" stroke-width="1.3"/>
<path d="M30.5 41 H35 L36 42.2 H41.5 V49.5 H30.5 Z" fill="#f7e08a" stroke="#d2b552" stroke-width="0.9"/><path d="M36.5 38.5 Q40.5 38.5 40.5 42.5 M38.6 41.6 L40.5 44.2 L42.4 41.6 Z" stroke="#2f9a3a" stroke-width="1.7" fill="#2f9a3a"/>
<path d="M47.5 40.5 H51.5 L52.5 41.8 H57.5 V43.2 H59.6 L56.6 48.6 H47.5 Z" fill="#f2c94a" stroke="#c79d28" stroke-width="0.9"/><path d="M49 48.4 L51.4 43.6 H59" stroke="#fbe38e" stroke-width="1.2" fill="none"/><path d="M52.6 50 Q55 50.4 56 47.6 M54.4 47.4 L57.6 46.2 L57 49.4 Z" stroke="#3a46c8" stroke-width="1.4" fill="#3a46c8"/>
<rect x="65" y="39" width="10.6" height="10.6" rx="0.8" fill="#2a7fe0" stroke="#1a5fb8" stroke-width="0.8"/><rect x="67.2" y="39.6" width="6.2" height="4.6" fill="#eaf2fc"/><rect x="67.6" y="46" width="5.2" height="3.4" fill="#1b3f86"/><rect x="68.4" y="46.8" width="1.4" height="2.4" fill="#dfe9f8"/>
<rect x="83.4" y="38.8" width="6.6" height="5.4" fill="#f2f4fa" stroke="#8d93ad" stroke-width="0.8"/><path d="M84.6 40.6 H88.8 M84.6 42.2 H88.8" stroke="#555c7a" stroke-width="0.8"/><path d="M81.6 44 H91.8 Q92.6 44 92.6 45 V47.6 Q92.6 49.6 90.4 49.6 H83 Q80.8 49.6 80.8 47.6 V45 Q80.8 44 81.6 44 Z" fill="#4a5fd6" stroke="#3445b0" stroke-width="0.8"/>
<path d="M105.6 39.8 L114.4 48.6 M114.4 39.8 L105.6 48.6" stroke="#5e5e5e" stroke-width="1.7"/>
<path d="M124 39.4 L129.6 48.8 M130.6 39.4 L125 48.8" stroke="#8a8a8a" stroke-width="1.4"/><circle cx="125" cy="48.4" r="1.2" fill="none" stroke="#8a8a8a" stroke-width="0.9"/><circle cx="129.6" cy="48.4" r="1.2" fill="none" stroke="#8a8a8a" stroke-width="0.9"/>
<rect x="138.6" y="39.4" width="7" height="7.4" fill="#9c9c9c"/><rect x="142.2" y="41.8" width="7.4" height="7.6" fill="#8a8a8a" stroke="#b8b8b8" stroke-width="0.6"/>
<rect x="155" y="39.6" width="8.6" height="8.6" rx="1" fill="#9a9a9a"/><rect x="157.4" y="38.6" width="3.8" height="2" fill="#7e7e7e"/><rect x="159.2" y="42.6" width="6.4" height="6.8" fill="#8c8c8c" stroke="#bdbdbd" stroke-width="0.6"/>
<g transform="translate(183.8 44.4) scale(1 1)"><path d="M-2.2 -1.2 Q3.8 -3.4 4.2 1.2 Q4.4 3.6 1.6 4.8" stroke="#2a3ad0" stroke-width="2" fill="none"/><path d="M-5.4 -0.6 L-0.8 -4.6 L-0.6 1.4 Z" fill="#2a3ad0"/></g>
<g transform="translate(201.2 44.4) scale(-1 1)"><path d="M-2.2 -1.2 Q3.8 -3.4 4.2 1.2 Q4.4 3.6 1.6 4.8" stroke="#9a9a9a" stroke-width="2" fill="none"/><path d="M-5.4 -0.6 L-0.8 -4.6 L-0.6 1.4 Z" fill="#9a9a9a"/></g>
<rect x="219" y="38.8" width="9.6" height="10.6" fill="#5a6068"/><rect x="220.2" y="40" width="7.2" height="3.4" fill="#c8d0d8"/><path d="M220.4 45.2 H227 M220.4 47.2 H225" stroke="#d8dce2" stroke-width="0.9"/><rect x="226.2" y="46.2" width="3.6" height="3.6" fill="#3cc85a"/>
<rect x="236" y="38.8" width="9.6" height="10.6" fill="#5a6068"/><rect x="237.2" y="40" width="7.2" height="3.4" fill="#c8d0d8"/><path d="M237.4 45.2 H244 M237.4 47.2 H242" stroke="#d8dce2" stroke-width="0.9"/><rect x="242.8" y="45.6" width="4.2" height="4.2" fill="#e8202a"/>
<rect x="259.4" y="38.8" width="10.4" height="10.8" rx="0.8" fill="#565c66"/><rect x="260.6" y="39.8" width="4" height="3" fill="#cfd5dc"/><path d="M266 40 V45.4 M263.4 44.4 L266 47.6 L268.6 44.4 Z" stroke="#fff" stroke-width="1.5" fill="#fff"/><path d="M261 48.4 H268.6" stroke="#e8e8e8" stroke-width="1"/>
<rect x="276.4" y="38.8" width="10.4" height="10.8" rx="0.8" fill="#5e646e"/><rect x="277.6" y="41" width="4.4" height="3.4" fill="#cfd5dc"/><path d="M284 48.6 V42.6 M281.4 43.4 L284 40 L286.6 43.4 Z" stroke="#fff" stroke-width="1.5" fill="#fff"/><path d="M277.6 48.4 H282" stroke="#e8e8e8" stroke-width="1"/>
<path d="M300.2 38.8 V48 L302.4 46 L304 49.8 L305.4 49.2 L303.8 45.6 L306.6 45.4 Z" fill="#111"/>
</g></svg>
<span class="t l b" style="left:306.60px;top:41.60px;font-size:7.5px;line-height:11px;color:#222;transform:scaleX(1.0449);">?</span>
<div style="position:absolute;left:97.5px;top:37.5px;width:1px;height:13.5px;background:#c6c6c6;"></div><div style="position:absolute;left:98.5px;top:37.5px;width:1px;height:13.5px;background:#f6f6f6;"></div>
<div style="position:absolute;left:172.0px;top:37.5px;width:1px;height:13.5px;background:#c6c6c6;"></div><div style="position:absolute;left:173.0px;top:37.5px;width:1px;height:13.5px;background:#f6f6f6;"></div>
<div style="position:absolute;left:212.1px;top:37.5px;width:1px;height:13.5px;background:#c6c6c6;"></div><div style="position:absolute;left:213.1px;top:37.5px;width:1px;height:13.5px;background:#f6f6f6;"></div>
<div style="position:absolute;left:252.9px;top:37.5px;width:1px;height:13.5px;background:#c6c6c6;"></div><div style="position:absolute;left:253.9px;top:37.5px;width:1px;height:13.5px;background:#f6f6f6;"></div>
<div style="position:absolute;left:293.0px;top:37.5px;width:1px;height:13.5px;background:#c6c6c6;"></div><div style="position:absolute;left:294.0px;top:37.5px;width:1px;height:13.5px;background:#f6f6f6;"></div>
<svg id="tb2" style="left:230px;top:89px" width="600" height="18" viewBox="230 89 600 18">
<rect x="248.6" y="90.3" width="15.599999999999994" height="15.2" fill="#fdfdfd" stroke="#cfcfcf" stroke-width="0.8"/>
<rect x="566.4" y="90.3" width="15.600000000000023" height="15.2" fill="#fdfdfd" stroke="#cfcfcf" stroke-width="0.8"/>
<rect x="774" y="90.3" width="15.600000000000023" height="15.2" fill="#fdfdfd" stroke="#cfcfcf" stroke-width="0.8"/>
<path d="M237.4 92.4 V102 L239.6 100 L241.2 103.6 L242.6 103 L241 99.5 L244 99.3 Z" fill="#fff" stroke="#222" stroke-width="0.9"/>
<path d="M252.6 94.2 V97.8 H260.2 V101.2" stroke="#222" stroke-width="1.3" fill="none"/><path d="M251 95.4 L252.6 93 L254.2 95.4 Z M258.6 100.6 L260.2 103 L261.8 100.6 Z" fill="#222"/>
<rect x="268.6" y="94.8" width="4.4" height="6.6" rx="1.4" fill="none" stroke="#2f9a4a" stroke-width="1.3"/><rect x="274.6" y="95.2" width="4" height="5.8" fill="none" stroke="#2f9a4a" stroke-width="1.3"/><path d="M273 98.2 H275" stroke="#2f9a4a" stroke-width="1.2"/>
<path d="M314.2 93 V103.4 M315 94 H320.4 V96.6 H315 M315 99 H318.6 V101.6 H315" stroke="#8e8e8e" stroke-width="1.1" fill="none"/>
<path d="M337.4 93 V103.4" stroke="#8e8e8e" stroke-width="1.1"/><rect x="329" y="94" width="8" height="3.4" fill="#8e8e8e"/><rect x="330.6" y="99" width="6.4" height="3.4" fill="#8e8e8e"/>
<path d="M345 93.4 H355.4" stroke="#8e8e8e" stroke-width="1.2"/><rect x="346.2" y="94.4" width="3.4" height="8" fill="#8e8e8e"/><rect x="351" y="94.4" width="3.4" height="6" fill="#8e8e8e"/>
<path d="M361.6 98.2 H372.8 M367.2 93.4 V103" stroke="#8e8e8e" stroke-width="1.1"/><rect x="368.4" y="95.4" width="2.4" height="5.8" fill="#8e8e8e"/>
<path d="M379 98.4 H390 M384.4 93.2 V103.2" stroke="#8e8e8e" stroke-width="1.1"/><rect x="381.6" y="99.6" width="5.8" height="2.2" fill="#8e8e8e"/>
<rect x="404.6" y="97.4" width="6.4" height="5" fill="#8a8a8a" transform="rotate(-18 410 98)"/><rect x="409" y="93.6" width="6.4" height="5" fill="#9a9a9a" transform="rotate(-18 410 98)"/>
<rect x="422.0" y="97.4" width="6.4" height="5" fill="#8a8a8a" transform="rotate(-18 427.4 98)"/><rect x="426.4" y="93.6" width="6.4" height="5" fill="#9a9a9a" transform="rotate(-18 427.4 98)"/>
<g transform="translate(453.8 98.4) scale(1 1)"><path d="M-2.2 -1.2 Q3.8 -3.4 4.2 1.2 Q4.4 3.6 1.6 4.8" stroke="#2a3ad0" stroke-width="2" fill="none"/><path d="M-5.4 -0.6 L-0.8 -4.6 L-0.6 1.4 Z" fill="#2a3ad0"/></g>
<g transform="translate(471.2 98.4) scale(-1 1)"><path d="M-2.2 -1.2 Q3.8 -3.4 4.2 1.2 Q4.4 3.6 1.6 4.8" stroke="#9a9a9a" stroke-width="2" fill="none"/><path d="M-5.4 -0.6 L-0.8 -4.6 L-0.6 1.4 Z" fill="#9a9a9a"/></g>
<rect x="491.4" y="92.8" width="11.2" height="10.8" fill="#f7d376" stroke="#6a5418" stroke-width="1"/>
<rect x="508.4" y="92.8" width="11.2" height="10.8" fill="#f7d376" stroke="#6a5418" stroke-width="1"/>
<rect x="525.1999999999999" y="92.8" width="11.2" height="10.8" fill="#f7d376" stroke="#6a5418" stroke-width="1"/>
<rect x="541.8" y="92.8" width="11.2" height="10.8" fill="#f7d376" stroke="#6a5418" stroke-width="1"/>
<rect x="569.2" y="93" width="9.8" height="10" fill="#fff" stroke="#333" stroke-width="1.1"/>
<rect x="586" y="93" width="9.8" height="10" fill="#fff" stroke="#444" stroke-width="1.1"/><path d="M590.9 93 V103" stroke="#444" stroke-width="1"/>
<rect x="602.6" y="93" width="10" height="10" fill="#fff" stroke="#555" stroke-width="1.1"/><path d="M606 93 V103 M609.2 93 V103" stroke="#555" stroke-width="0.9"/>
<circle cx="633" cy="96.8" r="3.6" fill="#f4f4f4" stroke="#333" stroke-width="1.2"/><path d="M635.6 99.6 L638.6 103" stroke="#333" stroke-width="1.9"/><path d="M631.2 96.8 H634.8" stroke="#222" stroke-width="1.1"/>
<path d="M633 95 V98.6" stroke="#222" stroke-width="1.1"/>
<circle cx="650" cy="96.8" r="3.6" fill="#f4f4f4" stroke="#333" stroke-width="1.2"/><path d="M652.6 99.6 L655.6 103" stroke="#333" stroke-width="1.9"/><path d="M648.2 96.8 H651.8" stroke="#222" stroke-width="1.1"/>
<rect x="672.6" y="99.6" width="11" height="3.6" fill="#f4f03a"/><path d="M676 100.2 L682.6 93.6" stroke="#555" stroke-width="1.8"/><path d="M675 101.4 L676.6 99.6" stroke="#222" stroke-width="1.2"/>
<path d="M692.2 92.8 V103.4 M697.8 92.8 V103.4" stroke="#5a6ad0" stroke-width="1" stroke-dasharray="1.2 1"/><path d="M689.6 95.4 H700 M689.6 100.6 H700" stroke="#8a94d8" stroke-width="0.9" stroke-dasharray="1.4 1"/><rect x="693.4" y="96.4" width="3.2" height="3.4" fill="#6a78d8"/>
<rect x="706.8" y="93" width="3.6" height="3.4" fill="#333"/><path d="M707.6 98 L710 101 M710 98 L707.6 101" stroke="#555" stroke-width="0.9"/><rect x="711.4" y="96.4" width="6" height="6.8" fill="#c9a53a" stroke="#5a4a1a" stroke-width="0.9"/><rect x="713" y="98.4" width="2.6" height="3" fill="#f2e2a0"/>
<circle cx="742.4" cy="95.4" r="2" fill="none" stroke="#d82a2a" stroke-width="1.1"/><path d="M738 95.4 H740.4" stroke="#d82a2a" stroke-width="1"/><rect x="733" y="93.2" width="3.2" height="3.6" fill="none" stroke="#333" stroke-width="0.9"/><rect x="733" y="98.6" width="3.2" height="3.6" fill="none" stroke="#333" stroke-width="0.9"/>
<rect x="749.6" y="92.6" width="7.4" height="6.4" fill="#b9bcc0" stroke="#7d8288" stroke-width="0.8"/><rect x="753" y="97" width="8" height="5.8" fill="#6f9a78" stroke="#3f6a4a" stroke-width="0.8"/><rect x="755" y="98.8" width="3" height="2.2" fill="#d2e6d6"/>
<path d="M776.4 102 H777.8 M778.8 102 H780.2 M780.6 102 H782.4 V94.6 H787.6" stroke="#111" stroke-width="1.7" fill="none"/>
<rect x="792.7" y="92.6" width="12" height="11" fill="#8f9bd0"/><rect x="792.7" y="92.6" width="12" height="3.2" fill="#b9c2e6"/><rect x="792.7" y="100" width="12" height="3.6" fill="#7a86bc"/><path d="M793.7 98.6 H803.7" stroke="#1a1a3a" stroke-width="1.1"/>
<path d="M798.7 93.8 V98 M796.3000000000001 96.2 L798.7 99.2 L801.1 96.2 Z" stroke="#111" stroke-width="1.3" fill="#111"/>
<rect x="809.4" y="92.6" width="12" height="11" fill="#8f9bd0"/><rect x="809.4" y="92.6" width="12" height="3.2" fill="#b9c2e6"/><rect x="809.4" y="100" width="12" height="3.6" fill="#7a86bc"/><path d="M810.4 98.6 H820.4" stroke="#1a1a3a" stroke-width="1.1"/>
<path d="M815.4 101.8 V96.4 M813.0 97.2 L815.4 94 L817.8 97.2 Z" stroke="#111" stroke-width="1.3" fill="#111"/>
</svg>
<span class="t s" style="left:285.20px;top:89.60px;font-size:13.8px;line-height:17px;color:#111;transform:scaleX(1.0633);">A</span>
<span class="t l b" style="left:493.20px;top:93.60px;font-size:6.2px;line-height:9px;color:#4a3a10;transform:scaleX(0.9212);">Co</span>
<span class="t l b" style="left:510.20px;top:93.60px;font-size:6.2px;line-height:9px;color:#4a3a10;transform:scaleX(0.8844);">GF</span>
<span class="t l b" style="left:527.00px;top:93.60px;font-size:6.2px;line-height:9px;color:#4a3a10;transform:scaleX(0.9594);">SF</span>
<span class="t l b" style="left:545.60px;top:93.60px;font-size:6.2px;line-height:9px;color:#4a3a10;transform:scaleX(0.9521);">L</span>
<span class="t l b" style="left:736.60px;top:97.20px;font-size:5px;line-height:8px;color:#d82a2a;transform:scaleX(1.0123);">SIM</span>
<div style="position:absolute;left:302.5px;top:91.5px;width:1px;height:13.0px;background:#c6c6c6;"></div><div style="position:absolute;left:303.5px;top:91.5px;width:1px;height:13.0px;background:#f6f6f6;"></div>
<div style="position:absolute;left:396.8px;top:91.5px;width:1px;height:13.0px;background:#c6c6c6;"></div><div style="position:absolute;left:397.8px;top:91.5px;width:1px;height:13.0px;background:#f6f6f6;"></div>
<div style="position:absolute;left:440.1px;top:91.5px;width:1px;height:13.0px;background:#c6c6c6;"></div><div style="position:absolute;left:441.1px;top:91.5px;width:1px;height:13.0px;background:#f6f6f6;"></div>
<div style="position:absolute;left:483.3px;top:91.5px;width:1px;height:13.0px;background:#c6c6c6;"></div><div style="position:absolute;left:484.3px;top:91.5px;width:1px;height:13.0px;background:#f6f6f6;"></div>
<div style="position:absolute;left:561.0px;top:91.5px;width:1px;height:13.0px;background:#c6c6c6;"></div><div style="position:absolute;left:562.0px;top:91.5px;width:1px;height:13.0px;background:#f6f6f6;"></div>
<div style="position:absolute;left:620.8px;top:91.5px;width:1px;height:13.0px;background:#c6c6c6;"></div><div style="position:absolute;left:621.8px;top:91.5px;width:1px;height:13.0px;background:#f6f6f6;"></div>
<div style="position:absolute;left:664.1px;top:91.5px;width:1px;height:13.0px;background:#c6c6c6;"></div><div style="position:absolute;left:665.1px;top:91.5px;width:1px;height:13.0px;background:#f6f6f6;"></div>
<div style="position:absolute;left:724.3px;top:91.5px;width:1px;height:13.0px;background:#c6c6c6;"></div><div style="position:absolute;left:725.3px;top:91.5px;width:1px;height:13.0px;background:#f6f6f6;"></div>
<div style="position:absolute;left:768.1px;top:91.5px;width:1px;height:13.0px;background:#c6c6c6;"></div><div style="position:absolute;left:769.1px;top:91.5px;width:1px;height:13.0px;background:#f6f6f6;"></div>
<div id="taskbar" style="position:absolute;left:0;top:698px;width:1280px;height:22px;background:linear-gradient(90deg,#2a6fae 0px,#1f5d9b 45px,#2c86c4 85px,#3294d6 140px,#2f90d4 330px,#2e8bd0 470px,#2b88d0 600px,#287fca 700px,#2572bc 800px,#2062aa 880px,#1f5498 925px,#2a5c9a 938px,#3a6ea8 950px,#1d4984 975px,#1a3f76 1100px,#1a3b70 1280px);"></div>
<div style="position:absolute;left:0px;top:698px;width:1280px;height:22px;background:linear-gradient(180deg,rgba(20,40,80,.55) 0,rgba(255,255,255,.10) 1.5px,rgba(255,255,255,.04) 50%,rgba(0,0,30,.12) 100%);"></div>
<svg style="left:900px;top:698px" width="90" height="22" viewBox="0 0 90 22"><path d="M22 0 L34 0 L66 22 L50 22 Z" fill="rgba(140,180,225,.55)"/><path d="M27 0 L31 0 L62 22 L57 22 Z" fill="rgba(200,225,250,.6)"/></svg>
<div style="position:absolute;left:93px;top:699px;width:35px;height:21px;background:linear-gradient(180deg,rgba(255,255,255,0.42) 0,rgba(255,255,255,0.23) 50%,rgba(255,255,255,0.13) 51%,rgba(255,255,255,0.21) 100%);border:1px solid rgba(255,255,255,0.57);border-bottom:0;border-radius:2px 2px 0 0;box-shadow:0 0 0 1px rgba(20,50,100,.35);"></div>
<div style="position:absolute;left:245px;top:699px;width:35px;height:21px;background:linear-gradient(180deg,rgba(255,255,255,0.3) 0,rgba(255,255,255,0.17) 50%,rgba(255,255,255,0.09) 51%,rgba(255,255,255,0.15) 100%);border:1px solid rgba(255,255,255,0.45);border-bottom:0;border-radius:2px 2px 0 0;box-shadow:0 0 0 1px rgba(20,50,100,.35);"></div>
<div style="position:absolute;left:474px;top:699px;width:35px;height:21px;background:linear-gradient(180deg,rgba(255,255,255,0.3) 0,rgba(255,255,255,0.17) 50%,rgba(255,255,255,0.09) 51%,rgba(255,255,255,0.15) 100%);border:1px solid rgba(255,255,255,0.45);border-bottom:0;border-radius:2px 2px 0 0;box-shadow:0 0 0 1px rgba(20,50,100,.35);"></div>
<div style="position:absolute;left:512px;top:699px;width:35px;height:21px;background:linear-gradient(180deg,rgba(255,255,255,0.66) 0,rgba(255,255,255,0.36) 50%,rgba(255,255,255,0.20) 51%,rgba(255,255,255,0.33) 100%);border:1px solid rgba(255,255,255,0.81);border-bottom:0;border-radius:2px 2px 0 0;box-shadow:0 0 0 1px rgba(20,50,100,.35);"></div>
<div style="position:absolute;left:550px;top:699px;width:35px;height:21px;background:linear-gradient(180deg,rgba(255,255,255,0.28) 0,rgba(255,255,255,0.15) 50%,rgba(255,255,255,0.08) 51%,rgba(255,255,255,0.14) 100%);border:1px solid rgba(255,255,255,0.43);border-bottom:0;border-radius:2px 2px 0 0;box-shadow:0 0 0 1px rgba(20,50,100,.35);"></div>
<div style="position:absolute;left:8.8px;top:692.8px;width:32.6px;height:31px;border-radius:50%;background:radial-gradient(ellipse at 50% 30%,#7fb6e2 0,#3f86c6 38%,#17508f 62%,#0e3a78 100%);box-shadow:0 0 0 1px rgba(170,200,230,.6),0 0 3px 1px rgba(10,30,70,.45);"></div>
<div style="position:absolute;left:10.6px;top:693.8px;width:29px;height:12px;border-radius:50% 50% 40% 40%/90% 90% 20% 20%;background:linear-gradient(180deg,rgba(255,255,255,.5),rgba(255,255,255,.06));"></div>
<svg style="left:14.4px;top:696.4px" width="22" height="24" viewBox="0 0 20 20"><path d="M2.2 2.8 Q5.6 0.6 9 2.6 L7.8 8.4 Q4.6 6.8 1 8.6 Z" fill="#e4642c"/><path d="M10.2 3 Q13.4 5 17.4 3.2 L16 9.2 Q12.6 11 9 9 Z" fill="#8fc43e"/><path d="M0.8 9.8 Q4.2 8 7.6 9.8 L6.4 15.6 Q3.2 13.8 -0.4 15.8 Z" fill="#3f9fe6"/><path d="M8.8 10.4 Q12 12.4 15.8 10.6 L14.6 16.4 Q11 18.2 7.6 16.2 Z" fill="#f3bd30"/></svg>
<span class="t l b" style="left:65.00px;top:697.40px;font-size:19px;line-height:23px;color:#7fd0f6;transform:scaleX(1.2762);font-style:italic;">e</span>
<svg style="left:62px;top:700px" width="20" height="18" viewBox="0 0 20 18"><path d="M2.6 15.4 Q-0.5 10 7 5.4 Q14 1.2 17.6 2.8" stroke="#e8c64a" stroke-width="1.5" fill="none"/></svg>
<svg id="taskicons" style="left:90px;top:698px" width="500" height="22" viewBox="90 698 500 22">
<rect x="102.6" y="703.6" width="15" height="11.4" rx="1" fill="#f2dc82"/><rect x="103.6" y="702.4" width="5" height="2.6" fill="#e8cc66"/><rect x="104.4" y="707.4" width="11.4" height="6.6" fill="#bfe0f2"/><rect x="110.6" y="702.6" width="4" height="3" fill="#f6ecb2"/>
<rect x="141.6" y="703.2" width="11.6" height="11.6" rx="1.6" fill="#8fb6d8" stroke="#c9dcee" stroke-width="0.8"/><circle cx="147.4" cy="709" r="4.2" fill="#f08a2a"/><path d="M146 706.6 L150 709 L146 711.4 Z" fill="#fff"/>
<rect x="179.6" y="703" width="12.4" height="11.4" rx="1" fill="#f2a63a"/><rect x="186.4" y="705" width="6.6" height="8.4" fill="#f8f4ea"/><circle cx="184" cy="708.6" r="2.6" fill="none" stroke="#fff" stroke-width="1.5"/>
<circle cx="221.6" cy="706.6" r="3.4" fill="#d8c2e0"/><circle cx="226.4" cy="707.4" r="2.6" fill="#c8a2b8"/><path d="M217.6 714.6 Q222 708.6 227 714.6 Z" fill="#9ab0d8"/><circle cx="224.6" cy="711.4" r="2.4" fill="#e6eaf4" stroke="#8a9ac0" stroke-width="0.8"/>
<rect x="255.4" y="704.6" width="12" height="9" rx="1" fill="#f3dc7e" transform="rotate(-8 261 709)"/><rect x="258.4" y="706.4" width="10" height="7.6" rx="1" fill="#f8e89c" transform="rotate(6 263 710)"/>
<rect x="295" y="703.6" width="11.6" height="10.6" fill="#6aa8dc" transform="rotate(-8 301 709)"/><rect x="297.4" y="704.6" width="7.4" height="7.6" fill="#d6e8f6" transform="rotate(-8 301 709)"/><path d="M299 706 V712 M302 705.6 V711.6" stroke="#5a8ec4" stroke-width="0.9" transform="rotate(-8 301 709)"/>
<rect x="332.6" y="702.6" width="13.4" height="12.4" rx="1" fill="#2f8a3a"/><path d="M333 713 Q339.4 707.4 345.6 713 V715 H333 Z" fill="#d6ecd0"/>
<circle cx="377.4" cy="709" r="6.2" fill="#2f9a4a" stroke="#bfe6c6" stroke-width="0.9"/><path d="M377.4 704.8 L379 709 L381.4 711.6 H373.4 L375.8 709 Z" fill="#f2f8f2"/>
<rect x="408.0" y="702.4" width="14.8" height="6.4" fill="#3f4756"/><rect x="408.0" y="708.8" width="14.8" height="6.2" fill="#7f8896"/>
<rect x="446.0" y="702.4" width="14.8" height="6.4" fill="#3f4756"/><rect x="446.0" y="708.8" width="14.8" height="6.2" fill="#7f8896"/>
<rect x="522.0" y="702.4" width="14.8" height="6.4" fill="#3f4756"/><rect x="522.0" y="708.8" width="14.8" height="6.2" fill="#7f8896"/>
<path d="M484.4 708.6 L491.6 703.6 L497.8 709 L490.4 714.2 Z" fill="#2a2e2a"/><path d="M488.4 708.4 L491.6 706.2 L494.2 708.8 L490.8 711 Z" fill="#8ac24a"/>
<path d="M560.4 708.6 L567.6 703.6 L573.8 709 L566.4 714.2 Z" fill="#2a2e2a"/><path d="M564.4 708.4 L567.6 706.2 L570.2 708.8 L566.8 711 Z" fill="#8ac24a"/>
<rect x="568.6" y="709.6" width="4.6" height="4" rx="1" fill="#e8504a"/>
</svg>
<span class="t l b" style="left:334.40px;top:702.40px;font-size:5.6px;line-height:8px;color:#e8f4e4;transform:scaleX(0.9366);">ETS</span>
<span class="t l b" style="left:408.40px;top:702.20px;font-size:5.6px;line-height:8px;color:#f0f2f6;transform:scaleX(0.8657);">LOGC</span>
<span class="t l b" style="left:414.40px;top:708.60px;font-size:5.6px;line-height:8px;color:#cfd4dc;transform:scaleX(1.1105);">V8</span>
<span class="t l b" style="left:446.40px;top:702.20px;font-size:5.6px;line-height:8px;color:#f0f2f6;transform:scaleX(1.1546);">LIFE</span>
<span class="t l b" style="left:452.40px;top:708.60px;font-size:5.6px;line-height:8px;color:#cfd4dc;transform:scaleX(2.0351);">S</span>
<span class="t l b" style="left:522.40px;top:702.20px;font-size:5.6px;line-height:8px;color:#f0f2f6;transform:scaleX(0.8657);">LOGC</span>
<span class="t l b" style="left:528.40px;top:708.60px;font-size:5.6px;line-height:8px;color:#cfd4dc;transform:scaleX(1.1105);">V8</span>
<span class="t l" style="left:1102.50px;top:702.40px;font-size:9.4px;line-height:13px;color:#e8eef6;transform:scaleX(1.0743);">DE</span>
<svg id="tray" style="left:1130px;top:698px" width="150" height="22" viewBox="1130 698 150 22"><path d="M1135.4 711.2 L1138 708.2 L1140.6 711.2 Z" fill="#e8eef6"/><rect x="1156.4" y="704.4" width="9.6" height="7.4" fill="#dfe6ee" stroke="#6a7888" stroke-width="0.8"/><rect x="1157.8" y="705.8" width="6.8" height="4.2" fill="#4a6a9a"/><path d="M1155.6 706 V714 M1155.6 713.6 H1160" stroke="#e8e8e8" stroke-width="1.2"/><path d="M1163.4 710.4 L1167 716 H1159.8 Z" fill="#f2c52a"/><path d="M1179.4 707.2 H1181.8 L1185.2 703.8 V716 L1181.8 712.6 H1179.4 Z" fill="#f2f4f6"/><path d="M1187.2 707 Q1189 709.8 1187.2 712.8 M1189.4 705.6 Q1192 709.8 1189.4 714.2" stroke="#cfd8e4" stroke-width="0.9" fill="none"/><rect x="1200.6" y="703" width="15" height="13" rx="1.6" fill="#58b4e6" stroke="#a6d8f2" stroke-width="1"/><rect x="1203.4" y="705.8" width="9.4" height="6" fill="#2f86c8"/><path d="M1205 714 H1211.4" stroke="#e8f4fa" stroke-width="1"/><rect x="1269.6" y="698.6" width="10.4" height="21.4" fill="rgba(120,150,200,.28)" stroke="rgba(200,215,240,.45)" stroke-width="0.8"/></svg>
<span class="t l" style="left:1232.60px;top:702.80px;font-size:9.6px;line-height:13px;color:#f2f5fa;transform:scaleX(1.0826);">10:06</span>
<div style="position:absolute;left:1279px;top:75px;width:1px;height:623px;background:#c4c4c4;"></div>
</body></html>
